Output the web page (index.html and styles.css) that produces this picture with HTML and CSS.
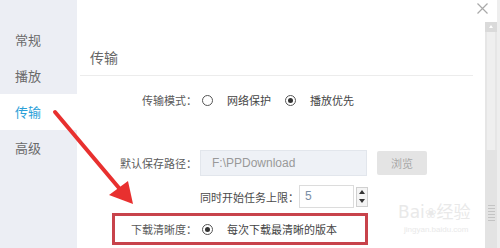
FILE: index.html
```html
<!DOCTYPE html>
<html lang="zh">
<head>
<meta charset="utf-8">
<title>设置 - 传输</title>
<link rel="stylesheet" href="styles.css">
</head>
<body>
<div class="window">
  <nav class="sidebar">
    <div class="nav-item">常规</div>
    <div class="nav-item">播放</div>
    <div class="nav-item active">传输</div>
    <div class="nav-item">高级</div>
  </nav>
  <main class="main">
    <div class="close">
      <svg width="11" height="11" viewBox="0 0 11 11"><path d="M0.5 0.5L10.5 10.5M10.5 0.5L0.5 10.5" stroke="#a9a9a9" stroke-width="1.2" fill="none"/></svg>
    </div>
    <header class="header"><h1 class="title">传输</h1></header>

    <div class="row row-mode">
      <span class="label">传输模式：</span>
      <span class="radio"></span><span class="opt">网络保护</span>
      <span class="radio checked"></span><span class="opt">播放优先</span>
    </div>

    <div class="row row-path">
      <span class="label">默认保存路径：</span>
      <div class="path-input">F:\PPDownload</div>
      <div class="btn">浏览</div>
    </div>

    <div class="row row-tasks">
      <span class="sub-label">同时开始任务上限：</span>
      <div class="spin-input">5</div>
      <div class="spin-arrows">
        <span class="arr up"></span>
        <span class="arr down"></span>
      </div>
    </div>

    <div class="row row-quality">
      <span class="label label-q">下载清晰度：</span>
      <span class="radio checked"></span><span class="opt">每次下载最清晰的版本</span>
    </div>

    <div class="watermark">
      <span class="wm-big">Bai<span class="wm-paw">&#x2740;</span>经验</span>
      <span class="wm-small">jingyan.baidu.com</span>
    </div>
  </main>
  <div class="scrollbar">
    <div class="sb-btn"></div>
    <div class="sb-track"></div>
    <div class="sb-thumb"><div class="grip"></div></div>
  </div>
  <div class="edge"></div>

  <svg class="arrow" width="500" height="248" viewBox="0 0 500 248">
    <line x1="55" y1="112" x2="119" y2="188" stroke="#e8302f" stroke-width="4" stroke-linecap="round"/>
    <polygon points="109,195 128,181 133,204" fill="#e8302f"/>
  </svg>
</div>
</body>
</html>
```

FILE: styles.css
```css
* { box-sizing: border-box; margin: 0; padding: 0; }
html, body { width: 500px; height: 248px; overflow: hidden; background: #fff; }
body {
  font-family: "Noto Sans CJK SC", "Noto Sans", sans-serif;
  font-size: 11px;
  color: #555;
}
.window {
  position: relative;
  display: flex;
  width: 500px;
  height: 248px;
  overflow: hidden;
}
.sidebar {
  width: 77px;
  flex: none;
  background: #eceef4;
  padding-top: 22px;
}
.nav-item {
  height: 36px;
  line-height: 36px;
  padding-left: 15px;
  font-size: 13px;
  color: #6a6a6a;
}
.nav-item.active {
  background: #fff;
  color: #2b9fd8;
}
.main {
  position: relative;
  flex: 1;
  display: flex;
  flex-direction: column;
  white-space: nowrap;
}
.close {
  position: absolute;
  top: 3px;
  right: -3px;
  width: 11px;
  height: 11px;
  display: flex;
  z-index: 1;
}
.header {
  height: 76px;
  margin-left: 3px;
  width: 393px;
  border-bottom: 1px solid #ececec;
  padding-top: 47px;
  padding-left: 10px;
}
.title {
  font-size: 14px;
  font-weight: normal;
  line-height: 20px;
  color: #666;
}
.row {
  display: flex;
  align-items: center;
}
.label {
  width: 120px;
  flex: none;
  text-align: right;
  color: #5a5a5a;
}
.radio {
  width: 11px;
  height: 11px;
  border: 1px solid #555;
  border-radius: 50%;
  margin-left: 5px;
  flex: none;
  display: flex;
  align-items: center;
  justify-content: center;
}
.radio.checked::after {
  content: "";
  width: 5px;
  height: 5px;
  border-radius: 50%;
  background: #333;
}
.opt {
  margin-left: 14px;
  color: #444;
}
.opt + .radio { margin-left: 14px; }
.row-mode {
  margin-top: 14px;
  height: 20px;
}
.row-path {
  margin-top: 40px;
  height: 26px;
}
.path-input {
  margin-left: 3px;
  width: 167px;
  height: 26px;
  background: #eef1f6;
  border: 1px solid #e2e6ec;
  color: #999;
  font-family: "Liberation Sans", "Noto Sans", sans-serif;
  font-size: 12px;
  line-height: 24px;
  padding-left: 11px;
}
.btn {
  margin-left: 10px;
  width: 50px;
  height: 24px;
  background: #e4e4e4;
  border-radius: 2px;
  color: #a8a8a8;
  text-align: center;
  line-height: 24px;
}
.row-tasks {
  margin-top: 9px;
  height: 23px;
  padding-left: 123px;
}
.sub-label { flex: none; width: 99px; color: #4a4a4a; }
.spin-input {
  flex: none;
  width: 55px;
  height: 23px;
  border: 1px solid #dcdcdc;
  color: #7a8ea5;
  font-family: "Liberation Sans", sans-serif;
  font-size: 12px;
  line-height: 21px;
  padding-left: 5px;
}
.spin-arrows {
  margin-left: 2px;
  width: 12px;
  height: 20px;
  border: 1px solid #d0d0d0;
  background: #f4f4f4;
  display: flex;
  flex-direction: column;
  align-items: center;
  justify-content: space-around;
}
.arr {
  width: 0; height: 0;
  border-left: 3px solid transparent;
  border-right: 3px solid transparent;
}
.arr.up { border-bottom: 4px solid #333; }
.arr.down { border-top: 4px solid #333; }
.row-quality {
  margin-top: 5px;
  margin-left: 35px;
  width: 256px;
  height: 32px;
  border: 3px solid #c8434b;
}
.label-q { width: 82px; }
.watermark {
  position: absolute;
  left: 321px;
  top: 200px;
  display: flex;
  flex-direction: column;
  align-items: flex-start;
  color: #e9e9e9;
  pointer-events: none;
}
.wm-big {
  font-family: "DejaVu Sans", "Noto Sans CJK SC", sans-serif;
  font-size: 17px;
  line-height: 24px;
}
.wm-paw { font-size: 14px; }
.wm-small {
  font-family: "Liberation Sans", sans-serif;
  font-size: 8px;
  line-height: 10px;
  margin-left: 6px;
}
.scrollbar {
  width: 12px;
  flex: none;
  padding-top: 22px;
  display: flex;
  flex-direction: column;
}
.sb-btn {
  height: 10px;
  background: #dadada;
  position: relative;
}
.sb-btn::after {
  content: "";
  position: absolute;
  left: 4px;
  top: 3px;
  border-left: 2px solid transparent;
  border-right: 2px solid transparent;
  border-bottom: 3px solid #fff;
}
.sb-track {
  height: 118px;
  background: #efefef;
  border-left: 2px solid #e6e6e6;
  border-right: 2px solid #e6e6e6;
}
.sb-thumb {
  flex: 1;
  background: #e3e3e3;
  padding-top: 55px;
  display: flex;
  justify-content: center;
}
.grip {
  width: 7px;
  height: 16px;
  background: repeating-linear-gradient(#c4c4c4 0 1px, transparent 1px 3px);
}
.edge {
  width: 3px;
  flex: none;
  background: #eeeeee;
}
.arrow {
  position: absolute;
  left: 0;
  top: 0;
  pointer-events: none;
}
```
